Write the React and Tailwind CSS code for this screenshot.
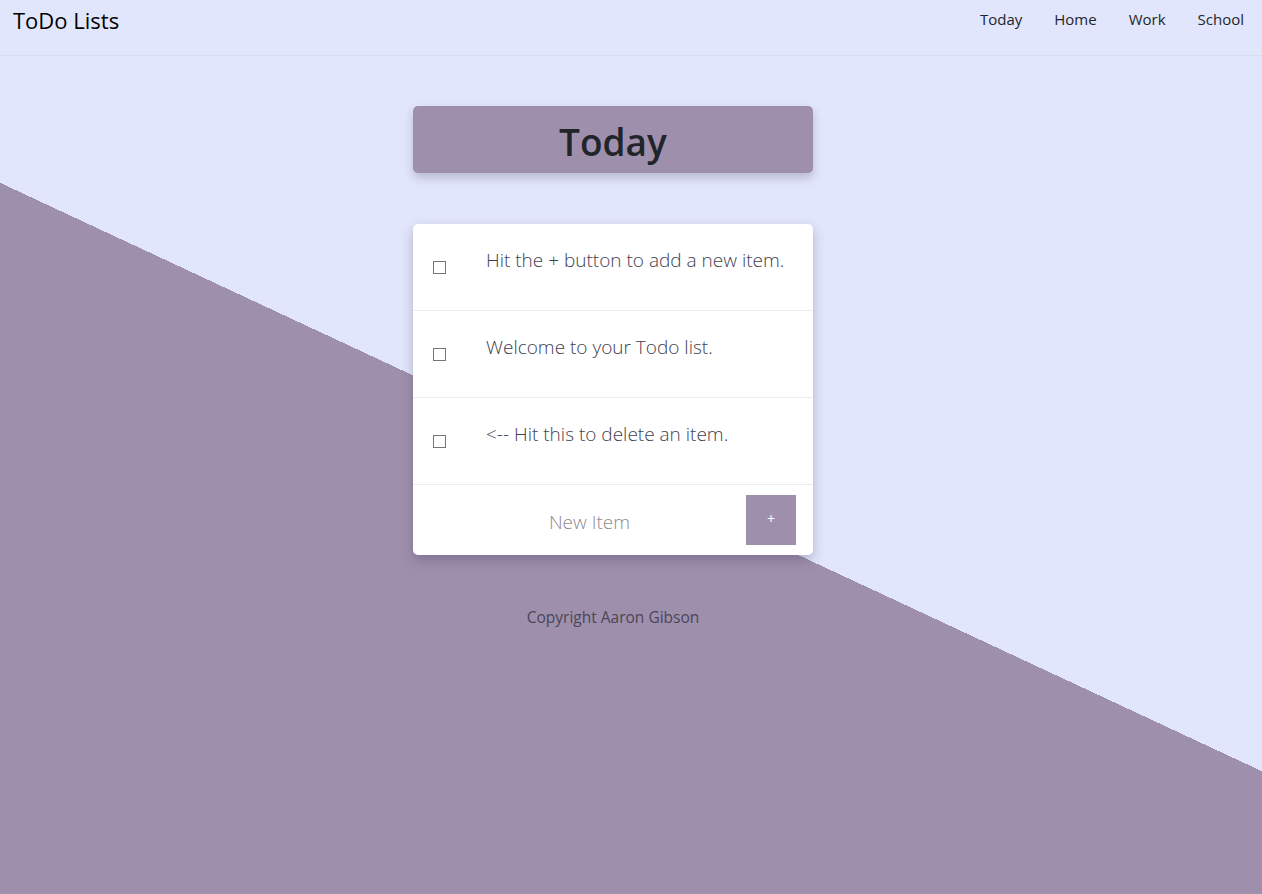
import { useState } from 'react';

const items = [
  'Hit the + button to add a new item.',
  'Welcome to your Todo list.',
  '<-- Hit this to delete an item.',
];

export default function App() {
  const [text, setText] = useState('');

  return (
    <div className="h-screen bg-[linear-gradient(205deg,#e2e6fc_699px,#9e90ad_699px)] font-['Open_Sans',sans-serif]">
      <nav className="flex h-[56px] items-start justify-between border-b border-[#d9dcef] pl-[13px] pr-[18px] pt-[4px]">
        <span className="text-[22px] leading-[32px] text-black">ToDo Lists</span>
        <ul className="flex gap-[32px] pt-[3px] text-[15px] leading-[24px] text-[#212529]">
          <li>Today</li>
          <li>Home</li>
          <li>Work</li>
          <li>School</li>
        </ul>
      </nav>

      <main className="flex flex-col items-center pr-[36px] pt-[50px]">
        <div className="flex h-[67px] w-[400px] items-center justify-center rounded-[5px] bg-[#9e90ad] pt-[3px] shadow-[0_5px_10px_rgba(60,50,90,0.25)]">
          <h1 className="text-[37px] font-semibold leading-none text-[#212529]">Today</h1>
        </div>

        <div className="mt-[51px] w-[400px] rounded-[5px] bg-white shadow-[0_5px_12px_rgba(60,50,90,0.3)]">
          {items.map((item) => (
            <div key={item} className="flex h-[87px] items-center border-b border-[#ececf0] pl-[20px]">
              <span className="h-[13px] w-[13px] border border-[#767676] bg-white" />
              <p className="-mt-[14px] ml-[40px] text-[19px] font-light text-[#3f4150]">{item}</p>
            </div>
          ))}
          <form className="flex h-[70px] items-center pl-[20px] pr-[17px]" onSubmit={(e) => e.preventDefault()}>
            <input
              value={text}
              onChange={(e) => setText(e.target.value)}
              placeholder="New Item"
              className="mt-[4px] w-[313px] bg-transparent text-center text-[19px] font-light text-[#3f4150] outline-none placeholder:text-[#8f8a8f]"
            />
            <button className="ml-auto flex h-[50px] w-[50px] items-center justify-center bg-[#9e90ad] pb-[4px] text-[14px] text-white">
              +
            </button>
          </form>
        </div>

        <p className="mt-[51px] text-[15.5px] text-[#4b4558]">Copyright Aaron Gibson</p>
      </main>
    </div>
  );
}
